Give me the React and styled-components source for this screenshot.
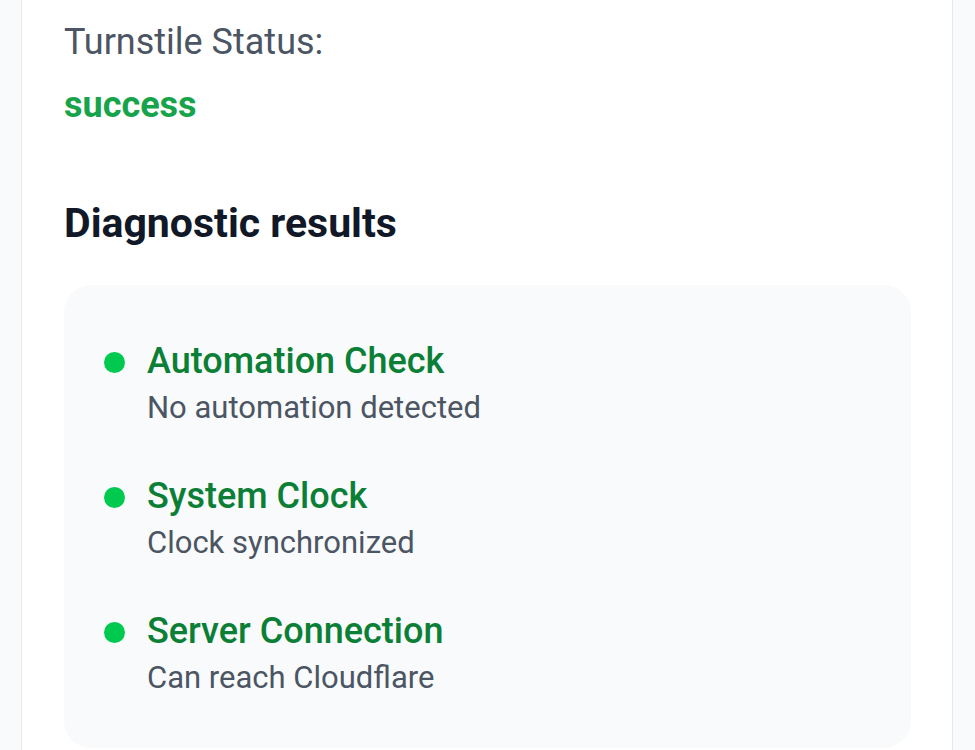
import { createGlobalStyle, styled } from 'styled-components';

const checks = [
  { title: 'Automation Check', detail: 'No automation detected' },
  { title: 'System Clock', detail: 'Clock synchronized' },
  { title: 'Server Connection', detail: 'Can reach Cloudflare' },
];

const App = () => {
  return (
    <>
      <GlobalStyle />
      <Page>
        <Card>
          <Label>Turnstile Status:</Label>
          <Status>success</Status>
          <Heading>Diagnostic results</Heading>
          <ResultsBox>
            {checks.map((check) => (
              <CheckRow key={check.title}>
                <Dot />
                <CheckText>
                  <CheckTitle>{check.title}</CheckTitle>
                  <CheckDetail>{check.detail}</CheckDetail>
                </CheckText>
              </CheckRow>
            ))}
          </ResultsBox>
        </Card>
      </Page>
    </>
  );
};

const GlobalStyle = createGlobalStyle`
  html, body {
    margin: 0;
    padding: 0;
    background: #f9fafb;
    font-family: Roboto, "Liberation Sans", sans-serif;
    overflow: hidden;
  }
`;

const Page = styled.div`
  height: 750px;
  padding-left: 21px;
  overflow: hidden;
`;

const Card = styled.div`
  box-sizing: border-box;
  width: 932px;
  min-height: 900px;
  background: #ffffff;
  border-left: 1px solid #e5e7eb;
  border-right: 1px solid #e5e7eb;
  padding: 15px 41px 0 42px;
`;

const Label = styled.div`
  font-size: 36px;
  line-height: 54px;
  color: #4b5563;
`;

const Status = styled.div`
  margin-top: 9px;
  font-size: 36px;
  line-height: 54px;
  font-weight: 700;
  color: #16a34a;
`;

const Heading = styled.h2`
  margin: 60px 0 0;
  font-size: 41px;
  line-height: 63px;
  font-weight: 700;
  color: #111827;
`;

const ResultsBox = styled.div`
  margin-top: 30px;
  background: #f9fafb;
  border-radius: 27px;
  padding: 52px 40px 48px;
  display: flex;
  flex-direction: column;
  gap: 42px;
`;

const CheckRow = styled.div`
  display: flex;
  align-items: flex-start;
  gap: 22px;
`;

const Dot = styled.span`
  flex: none;
  width: 21px;
  height: 21px;
  margin-top: 15px;
  border-radius: 50%;
  background: #00c950;
`;

const CheckText = styled.div`
  display: flex;
  flex-direction: column;
`;

const CheckTitle = styled.div`
  font-size: 36px;
  line-height: 48px;
  font-weight: 500;
  color: #0b7f36;
`;

const CheckDetail = styled.div`
  font-size: 31px;
  line-height: 45px;
  color: #4b5563;
`;

export default App;
